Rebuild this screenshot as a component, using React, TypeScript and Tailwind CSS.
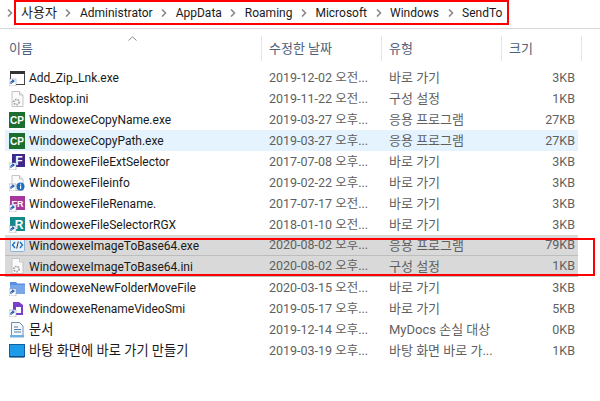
import type { ReactNode } from 'react';

const font = { fontFamily: 'Roboto, "Noto Sans CJK KR", sans-serif' };

function Shortcut() {
  return (
    <g>
      <rect x="0" y="9" width="7" height="7" fill="#fff" stroke="#9aa0a8" strokeWidth="0.6" />
      <path d="M2 14 V12 Q2 11 3.5 11 H4 M3.2 9.8 L5 11 L3.2 12.6" fill="none" stroke="#1f5fb4" strokeWidth="1.2" />
    </g>
  );
}

function Doc({ children }: { children?: ReactNode }) {
  return (
    <g>
      <path d="M3 .5 H10.5 L14 4 V15.5 H3 Z" fill="#fbfbfb" stroke="#c4c4c4" />
      <path d="M10.5 .5 V4 H14" fill="#eee" stroke="#c4c4c4" />
      {children}
    </g>
  );
}

const Gear = () => <circle cx="7.5" cy="11" r="2.6" fill="none" stroke="#a8a8a8" strokeWidth="2" strokeDasharray="1.6 1" />;

const glyph = { fontFamily: '"Liberation Sans", sans-serif', fontWeight: 700 };

const icons: Record<string, ReactNode> = {
  app: (
    <>
      <rect x="1.5" y="1.5" width="14" height="13" fill="#fff" stroke="#444" />
      <rect x="1" y="1" width="15" height="3" fill="#333" />
      <Shortcut />
    </>
  ),
  ini: <Doc><Gear /></Doc>,
  cp: (
    <>
      <rect x="0" y="0" width="16" height="16" fill="#1b6e30" />
      <text x="8" y="12" textAnchor="middle" fontSize="10" fill="#fff" style={glyph}>CP</text>
    </>
  ),
  ext: (
    <>
      <rect x="3" y="0" width="13" height="13" fill="#3b2a8c" />
      <text x="10" y="11" textAnchor="middle" fontSize="12" fill="#fff" style={glyph}>F</text>
      <Shortcut />
    </>
  ),
  info: (
    <>
      <Doc />
      <circle cx="11.5" cy="11.5" r="4" fill="#1a6fc0" />
      <rect x="11" y="10.5" width="1.2" height="3.4" fill="#fff" />
      <rect x="11" y="8.7" width="1.2" height="1.1" fill="#fff" />
      <Shortcut />
    </>
  ),
  rename: (
    <>
      <rect x="1" y="0" width="15" height="14" fill="#a8379c" />
      <text x="8.5" y="11" textAnchor="middle" fontSize="9" fill="#fff" style={glyph}>FR</text>
      <Shortcut />
    </>
  ),
  rgx: (
    <>
      <rect x="1" y="0" width="15" height="14" fill="#138a8a" />
      <text x="10" y="12" textAnchor="middle" fontSize="12" fill="#fff" style={glyph}>R</text>
      <Shortcut />
    </>
  ),
  code: (
    <>
      <rect x="1.5" y="1.5" width="14" height="13" rx="1" fill="#eaf3fb" stroke="#8bb4d8" />
      <path d="M6 5 L3.5 8 L6 11 M11 5 L13.5 8 L11 11" fill="none" stroke="#1a6fc0" strokeWidth="1.3" />
      <path d="M9.3 4.5 L7.7 11.5" stroke="#333" strokeWidth="1" />
    </>
  ),
  folder: (
    <>
      <path d="M1 2 H7 L8.5 3.5 H16 V14 H1 Z" fill="#5a8fe0" />
      <rect x="1" y="5" width="15" height="9" fill="#7aa7ea" />
      <Shortcut />
    </>
  ),
  video: (
    <>
      <path d="M4 1 H10 L14 4 V14 H4 Z" fill="#7a3fc8" />
      <rect x="7" y="6" width="5" height="6" fill="#fff" />
      <Shortcut />
    </>
  ),
  docs: (
    <>
      <path d="M2.5 .5 H10.5 L14 4 V14.5 H2.5 Z" fill="#f6f9fc" stroke="#6f8fb0" />
      <path d="M5 5 H9 M5 7.5 H12 M5 10 H12" stroke="#4f7fae" />
      <rect x="1" y="13" width="14" height="2.5" fill="#6fb0e0" />
    </>
  ),
  desktop: (
    <>
      <rect x="0.5" y="1.5" width="15" height="12" fill="#1e9be8" stroke="#0f5f9f" />
      <rect x="0.5" y="13" width="15" height="1.6" fill="#0f4f8a" />
    </>
  ),
};

type Row = { icon: string; name: string; date: string; type: string; size: string; state?: 'hover' | 'selected'; korean?: boolean };

const rows: Row[] = [
  { icon: 'app', name: 'Add_Zip_Lnk.exe', date: '2019-12-02 오전...', type: '바로 가기', size: '3KB' },
  { icon: 'ini', name: 'Desktop.ini', date: '2019-11-22 오전...', type: '구성 설정', size: '1KB' },
  { icon: 'cp', name: 'WindowexeCopyName.exe', date: '2019-03-27 오후...', type: '응용 프로그램', size: '27KB' },
  { icon: 'cp', name: 'WindowexeCopyPath.exe', date: '2019-03-27 오후...', type: '응용 프로그램', size: '27KB', state: 'hover' },
  { icon: 'ext', name: 'WindowexeFileExtSelector', date: '2017-07-08 오후...', type: '바로 가기', size: '3KB' },
  { icon: 'info', name: 'WindowexeFileinfo', date: '2019-02-22 오후...', type: '바로 가기', size: '3KB' },
  { icon: 'rename', name: 'WindowexeFileRename.', date: '2017-07-17 오전...', type: '바로 가기', size: '3KB' },
  { icon: 'rgx', name: 'WindowexeFileSelectorRGX', date: '2018-01-10 오전...', type: '바로 가기', size: '3KB' },
  { icon: 'code', name: 'WindowexeImageToBase64.exe', date: '2020-08-02 오후...', type: '응용 프로그램', size: '79KB', state: 'selected' },
  { icon: 'ini', name: 'WindowexeImageToBase64.ini', date: '2020-08-02 오후...', type: '구성 설정', size: '1KB', state: 'selected' },
  { icon: 'folder', name: 'WindowexeNewFolderMoveFile', date: '2020-03-15 오전...', type: '바로 가기', size: '3KB' },
  { icon: 'video', name: 'WindowexeRenameVideoSmi', date: '2019-05-17 오후...', type: '바로 가기', size: '5KB' },
  { icon: 'docs', name: '문서', date: '2019-12-14 오후...', type: 'MyDocs 손실 대상', size: '0KB', korean: true },
  { icon: 'desktop', name: '바탕 화면에 바로 가기 만들기', date: '2019-03-19 오후...', type: '바탕 화면 바로 가...', size: '1KB', korean: true },
];

const crumbs = ['Administrator', 'AppData', 'Roaming', 'Microsoft', 'Windows', 'SendTo'];

function Chevron() {
  return (
    <svg width="6" height="8" viewBox="0 0 6 8" className="shrink-0">
      <path d="M1 .5 L4.5 4 L1 7.5" fill="none" stroke="#8a8a8a" strokeWidth="1.6" />
    </svg>
  );
}

export default function App() {
  return (
    <div className="relative w-[600px] h-[401px] overflow-hidden bg-white text-[12px]" style={font}>
      {/* Breadcrumb */}
      <div className="h-[29px] border-b border-[#d9d9d9] flex items-center pl-[7px] pb-[2px] text-[12px] text-[#1a1a1a]">
        <Chevron />
        <span className="ml-[8px] text-[13px]">사용자</span>
        {crumbs.map(c => (
          <span key={c} className="flex items-center">
            <span className="mx-[8.5px]"><Chevron /></span>
            <span>{c}</span>
          </span>
        ))}
      </div>

      {/* Column headers */}
      <div className="relative h-[32px] mt-[7px] grid grid-cols-[262px_120px_120px_80px] text-[13px] text-[#4c607a]">
        <div className="pl-[9px] pt-[3px] border-r border-[#e5e5e5] h-[25px]">이름</div>
        <div className="pl-[7px] pt-[3px] border-r border-[#e5e5e5] h-[25px]">수정한 날짜</div>
        <div className="pl-[7px] pt-[3px] border-r border-[#e5e5e5] h-[25px]">유형</div>
        <div className="pl-[7px] pt-[3px] border-r border-[#e5e5e5] h-[25px]">크기</div>
        <svg width="9" height="5" viewBox="0 0 9 5" className="absolute left-[128px] top-[0px]">
          <path d="M.5 4.5 L4.5 .8 L8.5 4.5" fill="none" stroke="#8a8a8a" />
        </svg>
      </div>

      {/* File rows */}
      <div className="ml-[5px] w-[573px] -mt-[1px]">
        {rows.map(r => (
          <div
            key={r.name}
            className={`h-[21px] flex items-center text-[#5f5f5f] ${
              r.state === 'selected' ? 'bg-[#d9d9d9] border-b border-[#bdbdbd]' : r.state === 'hover' ? 'bg-[#e5f3ff]' : ''
            }`}
          >
            <svg width="16" height="16" viewBox="0 0 16 16" className="ml-[4px] shrink-0">{icons[r.icon]}</svg>
            <span className={`ml-[4px] w-[240px] shrink-0 pt-[1px] text-[#1a1a1a] truncate ${r.korean ? 'text-[13.25px]' : 'text-[12px]'}`}>{r.name}</span>
            <span className="w-[120px] shrink-0 pt-[1px] text-[12.5px] whitespace-nowrap">{r.date}</span>
            <span className="w-[120px] shrink-0 pt-[1px] text-[13px] whitespace-nowrap">{r.type}</span>
            <span className="w-[66px] shrink-0 pt-[1px] text-[12.5px] text-right">{r.size}</span>
          </div>
        ))}
      </div>

      {/* Red annotation boxes */}
      <div className="absolute left-[14px] top-0 w-[495px] h-[25px] border-2 border-[#f00]" />
      <div className="absolute left-0 top-[238px] w-[595px] h-[38px] border-y-2 border-r-2 border-[#f00]" />
    </div>
  );
}
